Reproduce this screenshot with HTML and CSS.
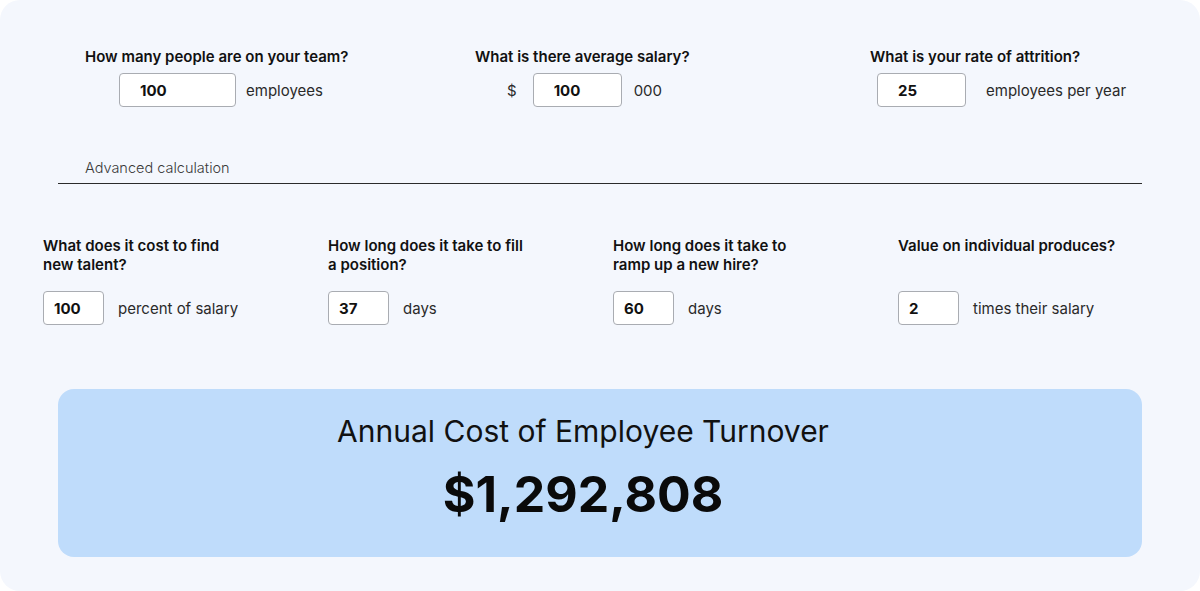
FILE: index.html
```html
<!DOCTYPE html>
<html lang="en">

<head>
    <meta charset="UTF-8">
    <meta name="viewport" content="width=device-width, initial-scale=1.0">
    <title>Turnover Calculator</title>
    <link rel="stylesheet" href="styles.css">
</head>

<body>
    <div class="card">
        <div class="basic">
            <div class="q q-team">
                <p class="label">How many people are on your team?</p>
                <div class="field">
                    <input class="num wide" type="text" value="100">
                    <span class="unit">employees</span>
                </div>
            </div>
            <div class="q q-salary">
                <p class="label">What is there average salary?</p>
                <div class="field">
                    <span class="unit dollar">$</span>
                    <input class="num mid" type="text" value="100">
                    <span class="unit">000</span>
                </div>
            </div>
            <div class="q q-attr">
                <p class="label">What is your rate of attrition?</p>
                <div class="field">
                    <input class="num mid" type="text" value="25">
                    <span class="unit">employees per year</span>
                </div>
            </div>
        </div>

        <div class="advanced">Advanced calculation</div>

        <div class="more">
            <div class="q">
                <p class="label">What does it cost to find<br>new talent?</p>
                <div class="field">
                    <input class="num small" type="text" value="100">
                    <span class="unit">percent of salary</span>
                </div>
            </div>
            <div class="q">
                <p class="label">How long does it take to fill<br>a position?</p>
                <div class="field">
                    <input class="num small" type="text" value="37">
                    <span class="unit">days</span>
                </div>
            </div>
            <div class="q">
                <p class="label">How long does it take to<br>ramp up a new hire?</p>
                <div class="field">
                    <input class="num small" type="text" value="60">
                    <span class="unit">days</span>
                </div>
            </div>
            <div class="q">
                <p class="label">Value on individual produces?<br>&nbsp;</p>
                <div class="field">
                    <input class="num small" type="text" value="2">
                    <span class="unit">times their salary</span>
                </div>
            </div>
        </div>

        <div class="result">
            <p class="result-title">Annual Cost of Employee Turnover</p>
            <p class="result-amount">$1,292,808</p>
        </div>
    </div>
</body>

</html>
```

FILE: styles.css
```css
body {
    margin: 0;
    background-color: #ffffff;
    font-family: Inter, "Noto Sans", Arial, sans-serif;
    color: #111111;
}

p {
    margin: 0;
}

.card {
    box-sizing: border-box;
    height: 591px;
    background-color: #f4f7fd;
    border-radius: 20px;
    padding-top: 47px;
    overflow: hidden;
}

.basic {
    display: flex;
    padding-left: 85px;
}

.q-team {
    width: 390px;
}

.q-salary {
    width: 395px;
}

.label {
    font-size: 15px;
    font-weight: 600;
    line-height: 20px;
    color: #111111;
}

.field {
    display: flex;
    align-items: center;
    margin-top: 6px;
}

.q-team .field {
    padding-left: 34px;
}

.q-salary .field {
    padding-left: 32px;
}

.q-attr .field {
    padding-left: 7px;
}

.num {
    box-sizing: border-box;
    height: 34px;
    border: 1px solid #a9acb2;
    border-radius: 4px;
    background-color: #ffffff;
    font-family: Inter, "Noto Sans", Arial, sans-serif;
    font-size: 15px;
    font-weight: 700;
    color: #111111;
    padding: 0 0 0 20px;
    outline: none;
}

.wide {
    width: 117px;
}

.mid {
    width: 89px;
}

.small {
    width: 61px;
    padding-left: 10px;
}

.unit {
    font-size: 15px;
    color: #2a2a2a;
    margin-left: 10px;
}

.q-salary .unit {
    margin-left: 12px;
}

.q-salary .dollar {
    margin-left: 0;
    margin-right: 16px;
}

.q-attr .unit {
    margin-left: 20px;
}

.more .unit {
    margin-left: 14px;
}

.advanced {
    margin: 51px 58px 0 58px;
    padding: 0 0 5px 27px;
    border-bottom: 1px solid #2b2b2b;
    font-size: 14.5px;
    font-weight: 300;
    line-height: 20px;
    color: #3a3a3a;
}

.more {
    display: grid;
    grid-template-columns: repeat(4, 285px);
    padding-left: 43px;
    margin-top: 52px;
}

.more .label {
    line-height: 19px;
}

.more .field {
    margin-top: 17px;
}

.result {
    box-sizing: border-box;
    height: 168px;
    margin: 64px 58px 0 58px;
    padding-top: 23px;
    background-color: #bfdcfb;
    border-radius: 16px;
    text-align: center;
    padding-right: 34px;
}

.result-title {
    font-size: 30px;
    line-height: 38px;
    font-weight: 400;
    color: #111111;
}

.result-amount {
    margin-top: 14px;
    font-size: 50px;
    line-height: 60px;
    font-weight: 700;
    color: #0a0a0a;
}
```
